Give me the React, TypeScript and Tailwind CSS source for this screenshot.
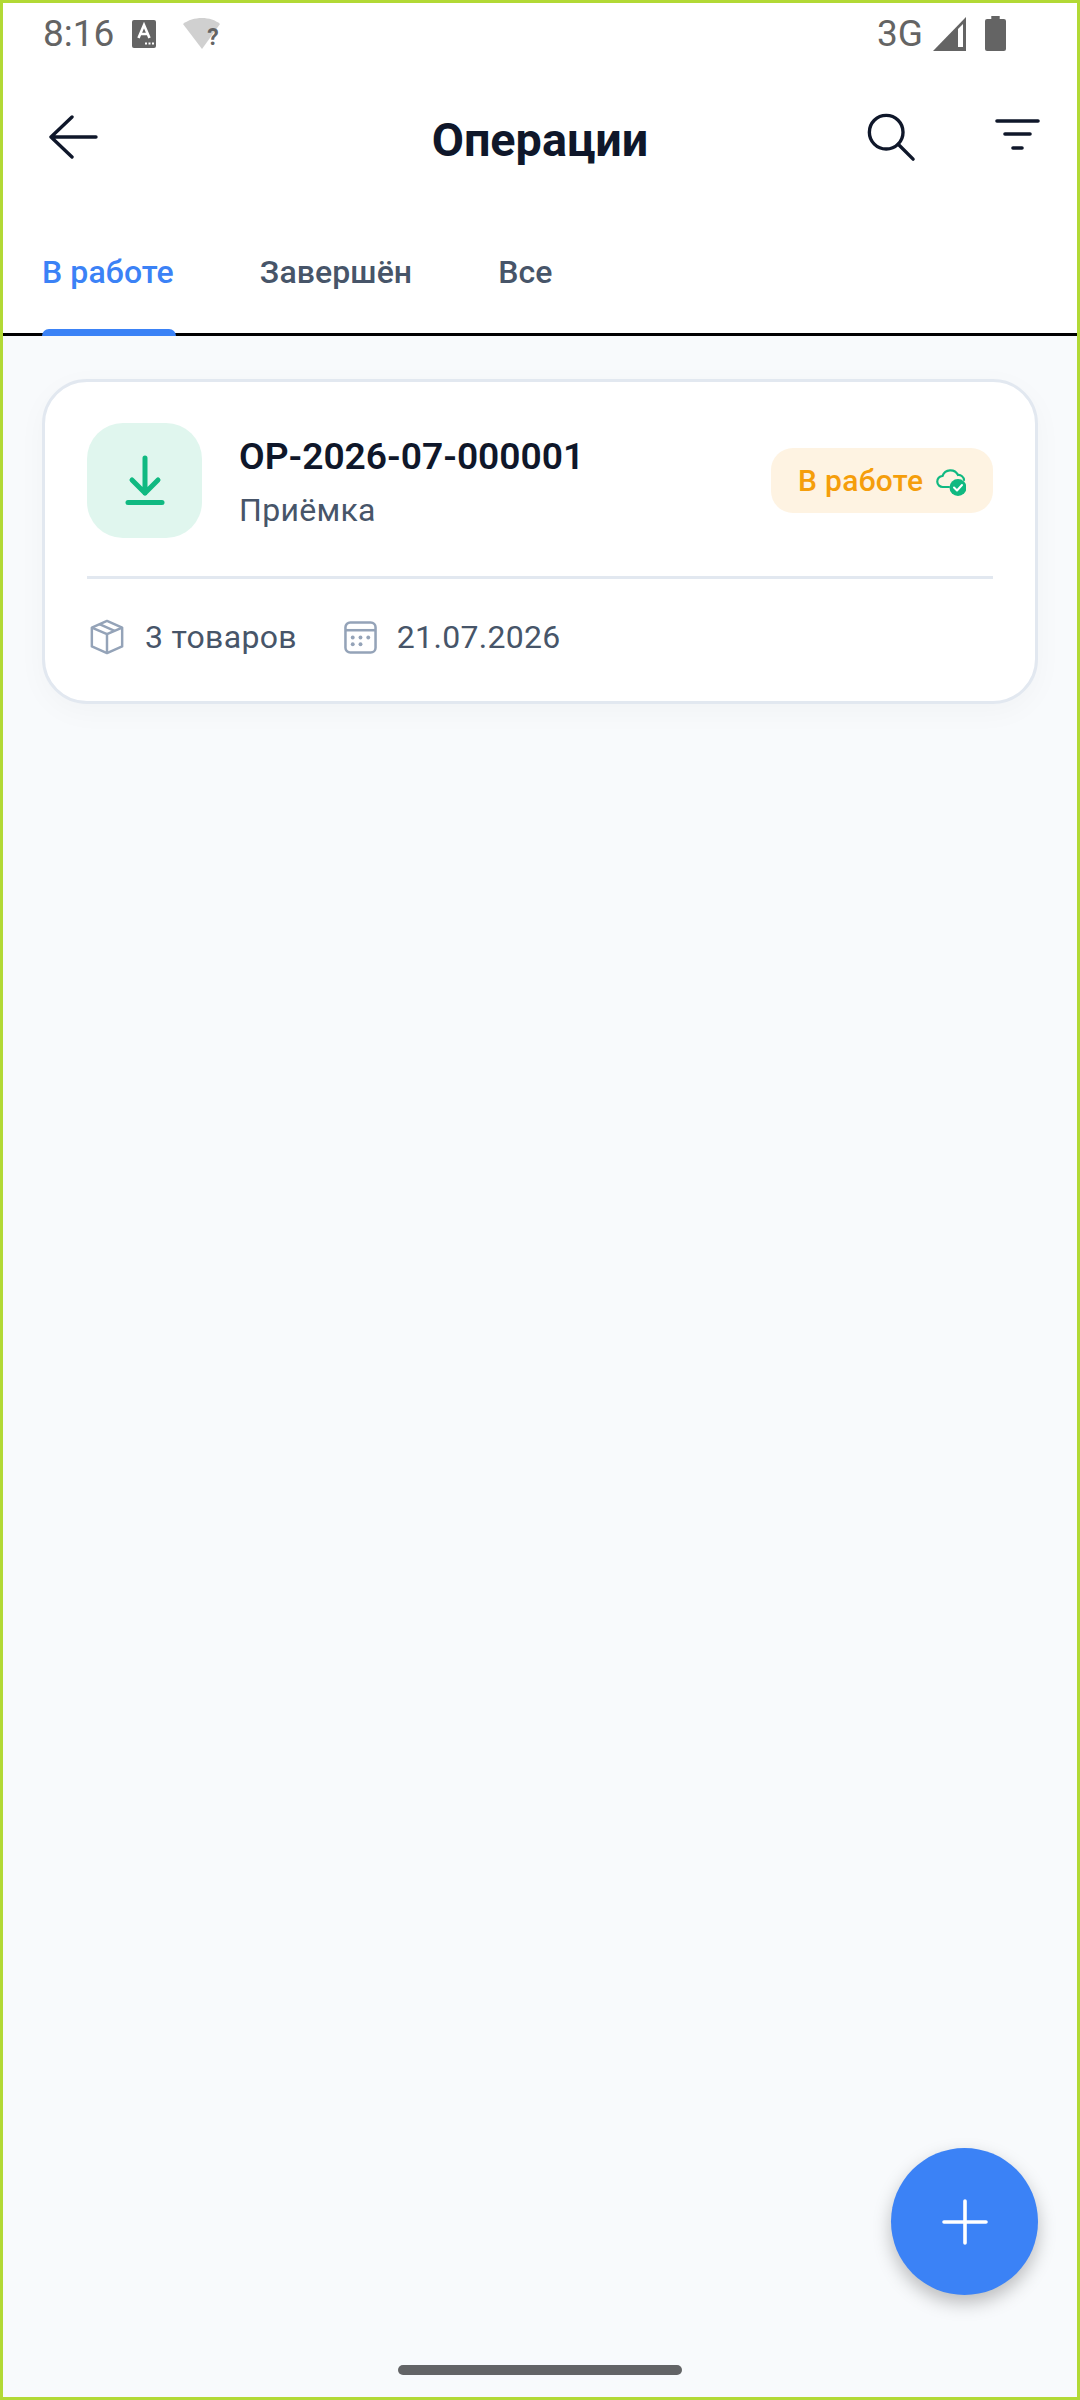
import React from "react";

const font = { fontFamily: "Roboto, sans-serif" };

function StatusBar() {
  return (
    <div className="flex h-[57px] items-center justify-between pl-[40px] pr-[71px] pt-[4px] text-[#646464]">
      <div className="flex items-center">
        <span className="text-[37px] leading-none">8:16</span>
        <svg className="ml-[18px]" width="24" height="28" viewBox="0 0 24 28">
          <rect width="24" height="28" rx="2" fill="#646464" />
          <path d="M6.5 18 L12 5 L17.5 18 M8.5 14 H15.5" stroke="#fff" strokeWidth="2.6" fill="none" />
          <path d="M13 23.5h2M16.5 23.5h2M20 23.5h2" stroke="#fff" strokeWidth="2" />
        </svg>
        <div className="relative ml-[27px] h-[32px] w-[40px]">
          <svg width="38" height="32" viewBox="0 0 38 32">
            <path d="M0 6 C10 -2 28 -2 37 6 L19 31 Z" fill="#d0d0d0" />
          </svg>
          <span className="absolute left-[24px] top-[6px] text-[23px] font-bold leading-[28px] text-[#646464]">?</span>
        </div>
      </div>
      <div className="flex items-center">
        <span className="text-[37px] leading-none">3G</span>
        <svg className="ml-[10px]" width="33" height="34" viewBox="0 0 33 34">
          <path d="M0 34 L33 0 V34 Z" fill="#646464" />
          <path d="M25 12 L30 7 V30 H25 Z" fill="#fff" />
        </svg>
        <svg className="ml-[19px]" width="21" height="35" viewBox="0 0 20 35" preserveAspectRatio="none">
          <path d="M6 0h8v3h4a2 2 0 0 1 2 2v28a2 2 0 0 1-2 2H2a2 2 0 0 1-2-2V5a2 2 0 0 1 2-2h4z" fill="#646464" />
        </svg>
      </div>
    </div>
  );
}

function Header() {
  return (
    <div className="flex h-[162px] items-center justify-between pl-[45px] pr-[36px] pb-[8px]">
      <svg width="50" height="44" viewBox="0 0 50 44" fill="none" stroke="#0f172a" strokeWidth="3.4" strokeLinecap="round" strokeLinejoin="round">
        <path d="M48 22H3M24 2 3 22l21 20" />
      </svg>
      <span className="pointer-events-none absolute left-0 right-0 pt-[6px] text-center text-[46.75px] font-bold leading-none text-[#0f172a]">Операции</span>
      <div className="flex items-center gap-[79.5px]">
        <svg width="50" height="50" viewBox="0 0 52 52" fill="none" stroke="#0f172a" strokeWidth="3.5" strokeLinecap="round">
          <circle cx="21" cy="21" r="17.5" />
          <path d="M33.5 33.5 49 49" />
        </svg>
        <svg className="mb-[6px]" width="46" height="34" viewBox="0 0 46 34" fill="none" stroke="#0f172a" strokeWidth="3.6" strokeLinecap="round">
          <path d="M2 4h41M10 17h25M18 31h9" />
        </svg>
      </div>
    </div>
  );
}

function Tabs() {
  return (
    <div className="relative flex h-[114px] items-start gap-[86px] border-b-[3px] border-black pl-[39px] pt-[30px] text-[32px] font-medium leading-[40px] tracking-[0.1px] text-[#475569]">
      <span className="text-[#3b82f6]">В работе</span>
      <span>Завершён</span>
      <span>Все</span>
      <div className="absolute bottom-[-3px] left-[39px] h-[7px] w-[134px] rounded-t-[7px] bg-[#3b82f6]" />
    </div>
  );
}

function Card() {
  return (
    <div className="mx-[39px] mt-[43px] rounded-[45px] border-[3px] border-[#e2e8f0] bg-white px-[42px] pt-[41px] shadow-[0_8px_30px_rgba(15,23,42,0.03)]">
      <div className="flex items-center">
        <div className="flex h-[115px] w-[115px] items-center justify-center rounded-[36px] bg-[#e0f6ee]">
          <svg width="40" height="52" viewBox="0 0 40 52" fill="none" stroke="#10b981" strokeWidth="5" strokeLinecap="round" strokeLinejoin="round">
            <path d="M20 3v35M7 25l13 13 13-13" />
            <path d="M3 47.5h34" />
          </svg>
        </div>
        <div className="ml-[37px] flex flex-1 flex-col pt-[2px]">
          <span className="text-[37.2px] font-semibold leading-[44px] text-[#0f172a]">OP-2026-07-000001</span>
          <span className="mt-[12px] text-[32px] leading-[40px] tracking-[0.3px] text-[#475569]">Приёмка</span>
        </div>
        <div className="flex h-[65px] w-[222px] items-center rounded-[22px] bg-[#fef3e2] pl-[27px]">
          <span className="text-[30px] font-medium leading-none tracking-[0.3px] text-[#f59e0b]">В работе</span>
          <svg className="ml-[13px]" width="30" height="30" viewBox="0 0 30 30">
            <path d="M13 21H7a5.5 5.5 0 0 1-.5-11A8.5 8.5 0 0 1 22 9a5.5 5.5 0 0 1 6 5" fill="none" stroke="#10b981" strokeWidth="2.2" strokeLinecap="round" />
            <circle cx="22" cy="21.5" r="8.5" fill="#10b981" />
            <path d="M18 21.5l3 3 5-5.5" fill="none" stroke="#fff" strokeWidth="2" strokeLinecap="round" strokeLinejoin="round" />
          </svg>
        </div>
      </div>
      <div className="mt-[38px] h-[3px] bg-[#e2e8f0]" />
      <div className="flex h-[122px] items-center pb-[6px] pl-[2px] text-[32px] leading-none tracking-[0.3px] text-[#475569]">
        <svg width="36" height="36" viewBox="0 0 36 38" fill="none" stroke="#94a3b8" strokeWidth="2.6" strokeLinejoin="round">
          <path d="M18 2 34 9v20l-16 7-16-7V9z" />
          <path d="M2 9l16 7 16-7M18 16v20M10 5.5 26 12.5" />
        </svg>
        <span className="ml-[20px]">3 товаров</span>
        <svg className="ml-[47px]" width="33" height="33" viewBox="0 0 34 34" fill="none" stroke="#94a3b8" strokeWidth="2.6">
          <rect x="1.5" y="1.5" width="31" height="31" rx="5" />
          <path d="M1.5 9.5h31" />
          <g fill="#94a3b8" stroke="none">
            <circle cx="9" cy="17" r="2" /><circle cx="17" cy="17" r="2" /><circle cx="25" cy="17" r="2" />
            <circle cx="9" cy="24" r="2" /><circle cx="17" cy="24" r="2" />
          </g>
        </svg>
        <span className="ml-[20px]">21.07.2026</span>
      </div>
    </div>
  );
}

export default function App() {
  return (
    <div style={font} className="relative box-border flex h-[2400px] w-[1080px] flex-col overflow-hidden border-[3.5px] border-[#b2d935] bg-[#f8fafc]">
      <div className="bg-white">
        <StatusBar />
        <Header />
        <Tabs />
      </div>
      <Card />
      <button className="absolute bottom-[102px] right-[39px] flex h-[147px] w-[147px] items-center justify-center rounded-full bg-[#3b82f6] shadow-[0_8px_18px_rgba(0,0,0,0.25)]">
        <svg width="48" height="48" viewBox="0 0 48 48" fill="none" stroke="#fff" strokeWidth="3.6" strokeLinecap="round">
          <path d="M24 3v42M3 24h42" />
        </svg>
      </button>
      <div className="absolute bottom-[22px] left-[395px] h-[10px] w-[284px] rounded-full bg-[#636466]" />
    </div>
  );
}
